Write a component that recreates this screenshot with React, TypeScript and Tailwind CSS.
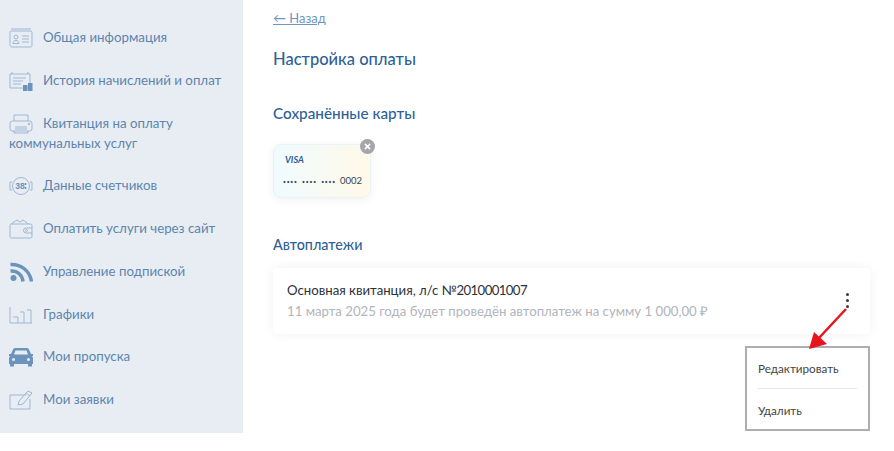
import type { ReactNode } from "react";

const stroke = "#9db7d3";
const fill = "#6c93b9";

const IconBox = ({ children }: { children: ReactNode }) => (
  <svg viewBox="0 0 24 20" className="inline-block w-6 h-5 mr-[10px] align-baseline -my-[6px]" fill="none" stroke={stroke} strokeWidth="1">
    {children}
  </svg>
);

const menu = [
  {
    title: "Общая информация",
    icon: (
      <>
        <path d="M2 1h20" />
        <rect x="1" y="3" width="22" height="16" rx="1.500" />
        <circle cx="7" cy="9" r="2" />
        <path d="M4 15.500c0-2 1.500-3 3-3s3 1 3 3zM13 8h7M13 11h7M13 14h7" />
      </>
    ),
  },
  {
    title: "История начислений и оплат",
    icon: (
      <>
        <path d="M1 3h20v14H1zM3 3V1M19 3V1M4 7h13M4 10h10M4 13h8" />
        <rect x="14" y="14" width="4.500" height="6" fill={fill} stroke="none" />
        <rect x="19" y="12" width="4.500" height="8" fill={fill} stroke="none" />
      </>
    ),
  },
  {
    title: "Квитанция на оплату коммунальных услуг",
    icon: (
      <>
        <path d="M5 7V1h14v6" />
        <rect x="1" y="7" width="22" height="10" rx="2.500" />
        <path d="M5 17v2h14v-2M6 13h12M6 15h12" />
        <circle cx="20" cy="10" r=".8" />
      </>
    ),
  },
  {
    title: "Данные счетчиков",
    icon: (
      <>
        <circle cx="12" cy="10" r="8.500" />
        <path d="M3 6H1v8h2M21 6h2v8h-2" />
        <text x="11" y="13" textAnchor="middle" fontSize="8.500" fontWeight="700" fill={fill} stroke="none" fontFamily="'Liberation Sans', sans-serif">
          38
        </text>
        <path d="M16.500 7v2M16.500 11v2" strokeWidth="1.500" stroke={fill} />
      </>
    ),
  },
  {
    title: "Оплатить услуги через сайт",
    icon: (
      <>
        <rect x="1" y="5" width="22" height="14" rx="1.500" />
        <path d="M2 5l6-4 3 2 3-2 3 2 2 2M23 9h-6a2.500 2.500 0 0 0 0 5h6" />
        <circle cx="17.500" cy="11.500" r="1" />
      </>
    ),
  },
  {
    title: "Управление подпиской",
    icon: (
      <g stroke={fill} strokeWidth="3.400">
        <circle cx="4.500" cy="16" r="3" fill={fill} stroke="none" />
        <path d="M1.500 9c7-.5 12 4.500 12.500 10.500" />
        <path d="M1.500 2.500c11-.5 19.500 7 21 17" />
      </g>
    ),
  },
  {
    title: "Графики",
    icon: <path d="M1 2v16h22M4 12h5v6M11 7h4v11M18 5h4v13" />,
  },
  {
    title: "Мои пропуска",
    icon: (
      <g stroke="none">
        <path
          fill={fill}
          d="M6 1h12q1.500 0 2 1.500L22 7h2v2h-1l1 2v6h-1v2.500h-4V17H5v2.500H1V17H0v-6l1-2H0V7h2l2-4.500Q4.500 1 6 1zM6.500 3.500L5 7.500h14l-1.500-4z"
          fillRule="evenodd"
        />
        <circle cx="4.500" cy="12.500" r="1.500" fill="#e8edf4" />
        <circle cx="19.500" cy="12.500" r="1.500" fill="#e8edf4" />
      </g>
    ),
  },
  {
    title: "Мои заявки",
    icon: (
      <>
        <path d="M17 5H1v14h20V9" />
        <path d="M9 15l1-4L19 1l4 2-9 11zM17 3l4 3" />
      </>
    ),
  },
];

export default function App() {
  return (
    <div className="flex min-h-[451px] bg-white font-['Lato','Liberation_Sans',sans-serif] overflow-hidden">
      <aside className="w-[243px] h-[433px] shrink-0 bg-[#e8edf4] pt-[27px] px-[9px] flex flex-col gap-[22.750px] text-[13.300px] leading-[20px] text-[#5c85ad]">
        {menu.map((item) => (
          <div key={item.title}>
            <IconBox>{item.icon}</IconBox>
            {item.title}
          </div>
        ))}
      </aside>

      <main className="flex-1 pl-[30px] pr-[24px] pt-[8px]">
        <a className="block text-[13px] leading-[20px] text-[#6d97bd] underline">← Назад</a>
        <h1 className="mt-[21px] text-[16.500px] leading-[20px] font-medium text-[#2f5f96]">Настройка оплаты</h1>
        <h2 className="mt-[34px] text-[15.300px] leading-[20px] font-medium text-[#2f5f96]">Сохранённые карты</h2>

        <div className="relative mt-[21px] w-[98px] h-[54px] rounded-[8px] border border-[#e6f3f8] bg-gradient-to-r from-[#f0fbff] to-[#fff9e8] shadow-[0_2px_10px_rgba(0,0,0,0.06)] pl-[9px] pr-[8px] pt-[9px]">
          <div className="ml-[2px] text-[9px] leading-[12px] font-bold italic text-[#2a5a96]">VISA</div>
          <div className="mt-[8px] flex justify-between items-center text-[9.500px] leading-[14px] text-[#3a4458]">
            <span className="text-[10.500px] tracking-[0.8px] [word-spacing:1px] font-bold">···· ···· ····</span>
            <span>0002</span>
          </div>
          <span className="absolute -top-[6px] -right-[5px] w-[15px] h-[15px] rounded-full bg-[#a5a5ab] flex items-center justify-center">
            <svg viewBox="0 0 8 8" className="w-[7px] h-[7px]" stroke="white" strokeWidth="1.800">
              <path d="M1 1l6 6M7 1L1 7" />
            </svg>
          </span>
        </div>

        <h2 className="mt-[37px] text-[14.300px] leading-[20px] font-medium text-[#2f5f96]">Автоплатежи</h2>

        <div className="relative mt-[13px] h-[66px] bg-white rounded-[4px] shadow-[0_0_12px_rgba(0,0,0,0.06)] pl-[14px] pt-[12px]">
          <p className="text-[13.200px] leading-[20px] text-[#2d3138]">
            Основная квитанция, л/с <span className="tracking-[-0.6px]">№2010001007</span>
          </p>
          <p className="mt-[1px] text-[13.200px] leading-[20px] text-[#b1b4ba]">
            11 марта 2025 года будет проведён автоплатеж на сумму 1 000,00 ₽
          </p>
          <div className="absolute right-[21px] top-[25px] flex flex-col gap-[3px]">
            <span className="w-[3px] h-[3px] rounded-full bg-[#333a48]" />
            <span className="w-[3px] h-[3px] rounded-full bg-[#333a48]" />
            <span className="w-[3px] h-[3px] rounded-full bg-[#333a48]" />
          </div>

          <div className="absolute right-0 top-[78px] w-[125px] h-[85px] bg-white border-2 border-[#aeaeae] px-[11px] text-[11.700px] text-[#444]">
            <div className="h-[41px] pt-[11px] leading-[18px] border-b border-[#e8e8e8]">Редактировать</div>
            <div className="pt-[12px] leading-[18px]">Удалить</div>
          </div>
          <svg viewBox="0 0 44 46" className="absolute right-[20px] top-[39px] w-[44px] h-[46px]">
            <path d="M40 2L12 32" stroke="#e8141c" strokeWidth="2.500" fill="none" />
            <path d="M3 42L8 25l13 12z" fill="#e8141c" />
          </svg>
        </div>
      </main>
    </div>
  );
}
